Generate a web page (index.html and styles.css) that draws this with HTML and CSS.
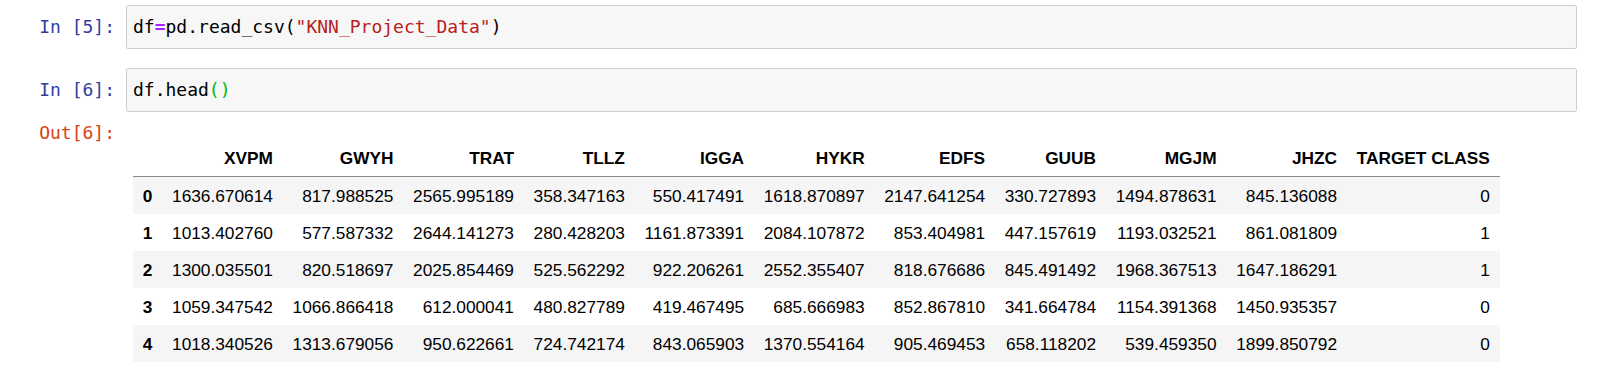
FILE: index.html
```html
<!DOCTYPE html>
<html lang="en">
<head>
    <meta charset="UTF-8">
    <title>KNN Project</title>
    <link rel="stylesheet" href="styles.css">
</head>
<body>
    <div class="notebook">
        <div class="cell first">
            <div class="prompt in">In&nbsp;[5]:</div>
            <div class="input">df<span class="op">=</span>pd.read_csv(<span class="str">"KNN_Project_Data"</span>)</div>
        </div>
        <div class="cell">
            <div class="prompt in">In&nbsp;[6]:</div>
            <div class="input">df.head<span class="match">()</span></div>
        </div>
        <div class="cell output">
            <div class="prompt out">Out[6]:</div>
            <div class="output-area">
                <table class="dataframe">
                    <thead>
                        <tr><th></th><th>XVPM</th><th>GWYH</th><th>TRAT</th><th>TLLZ</th><th>IGGA</th><th>HYKR</th><th>EDFS</th><th>GUUB</th><th>MGJM</th><th>JHZC</th><th>TARGET CLASS</th></tr>
                    </thead>
                    <tbody>
                        <tr><th>0</th><td>1636.670614</td><td>817.988525</td><td>2565.995189</td><td>358.347163</td><td>550.417491</td><td>1618.870897</td><td>2147.641254</td><td>330.727893</td><td>1494.878631</td><td>845.136088</td><td>0</td></tr>
                        <tr><th>1</th><td>1013.402760</td><td>577.587332</td><td>2644.141273</td><td>280.428203</td><td>1161.873391</td><td>2084.107872</td><td>853.404981</td><td>447.157619</td><td>1193.032521</td><td>861.081809</td><td>1</td></tr>
                        <tr><th>2</th><td>1300.035501</td><td>820.518697</td><td>2025.854469</td><td>525.562292</td><td>922.206261</td><td>2552.355407</td><td>818.676686</td><td>845.491492</td><td>1968.367513</td><td>1647.186291</td><td>1</td></tr>
                        <tr><th>3</th><td>1059.347542</td><td>1066.866418</td><td>612.000041</td><td>480.827789</td><td>419.467495</td><td>685.666983</td><td>852.867810</td><td>341.664784</td><td>1154.391368</td><td>1450.935357</td><td>0</td></tr>
                        <tr><th>4</th><td>1018.340526</td><td>1313.679056</td><td>950.622661</td><td>724.742174</td><td>843.065903</td><td>1370.554164</td><td>905.469453</td><td>658.118202</td><td>539.459350</td><td>1899.850792</td><td>0</td></tr>
                    </tbody>
                </table>
            </div>
        </div>
    </div>
</body>
</html>
```

FILE: styles.css
```css
body { margin: 0; background: #fff; font-family: 'Liberation Sans', Arial, sans-serif; }
.notebook { padding-right: 23px; }
.cell { display: flex; align-items: flex-start; margin-top: 19px; }
.cell.first { margin-top: 5px; }
.cell.output { margin-top: 10px; }
.prompt { flex: 0 0 115px; padding-right: 11px; text-align: right; font-family: 'DejaVu Sans Mono', 'Liberation Mono', monospace; font-size: 18px; line-height: 22px; white-space: nowrap; }
.prompt.in { color: #303f9f; padding-top: 11px; }
.prompt.out { color: #d84315; }
.input { flex: 1; background: #f7f7f7; border: 1px solid #cfcfcf; border-radius: 2px; padding: 10px 6px; font-family: 'DejaVu Sans Mono', 'Liberation Mono', monospace; font-size: 18px; line-height: 22px; color: #000; white-space: pre; }
.op { color: #aa22ff; font-weight: bold; }
.str { color: #ba2121; }
.match { color: #00bb00; }
.output-area { flex: 1; padding: 17px 0 0 7px; }
.dataframe { border-collapse: collapse; border-spacing: 0; color: #000; font-size: 17.3px; line-height: 20px; white-space: nowrap; }
.dataframe th, .dataframe td { padding: 8.5px 9.8px; text-align: right; vertical-align: middle; }
.dataframe th { font-weight: bold; }
.dataframe thead th { border-bottom: 1px solid #8a8a8a; }
.dataframe tbody tr:nth-child(odd) { background: #f5f5f5; }
```
